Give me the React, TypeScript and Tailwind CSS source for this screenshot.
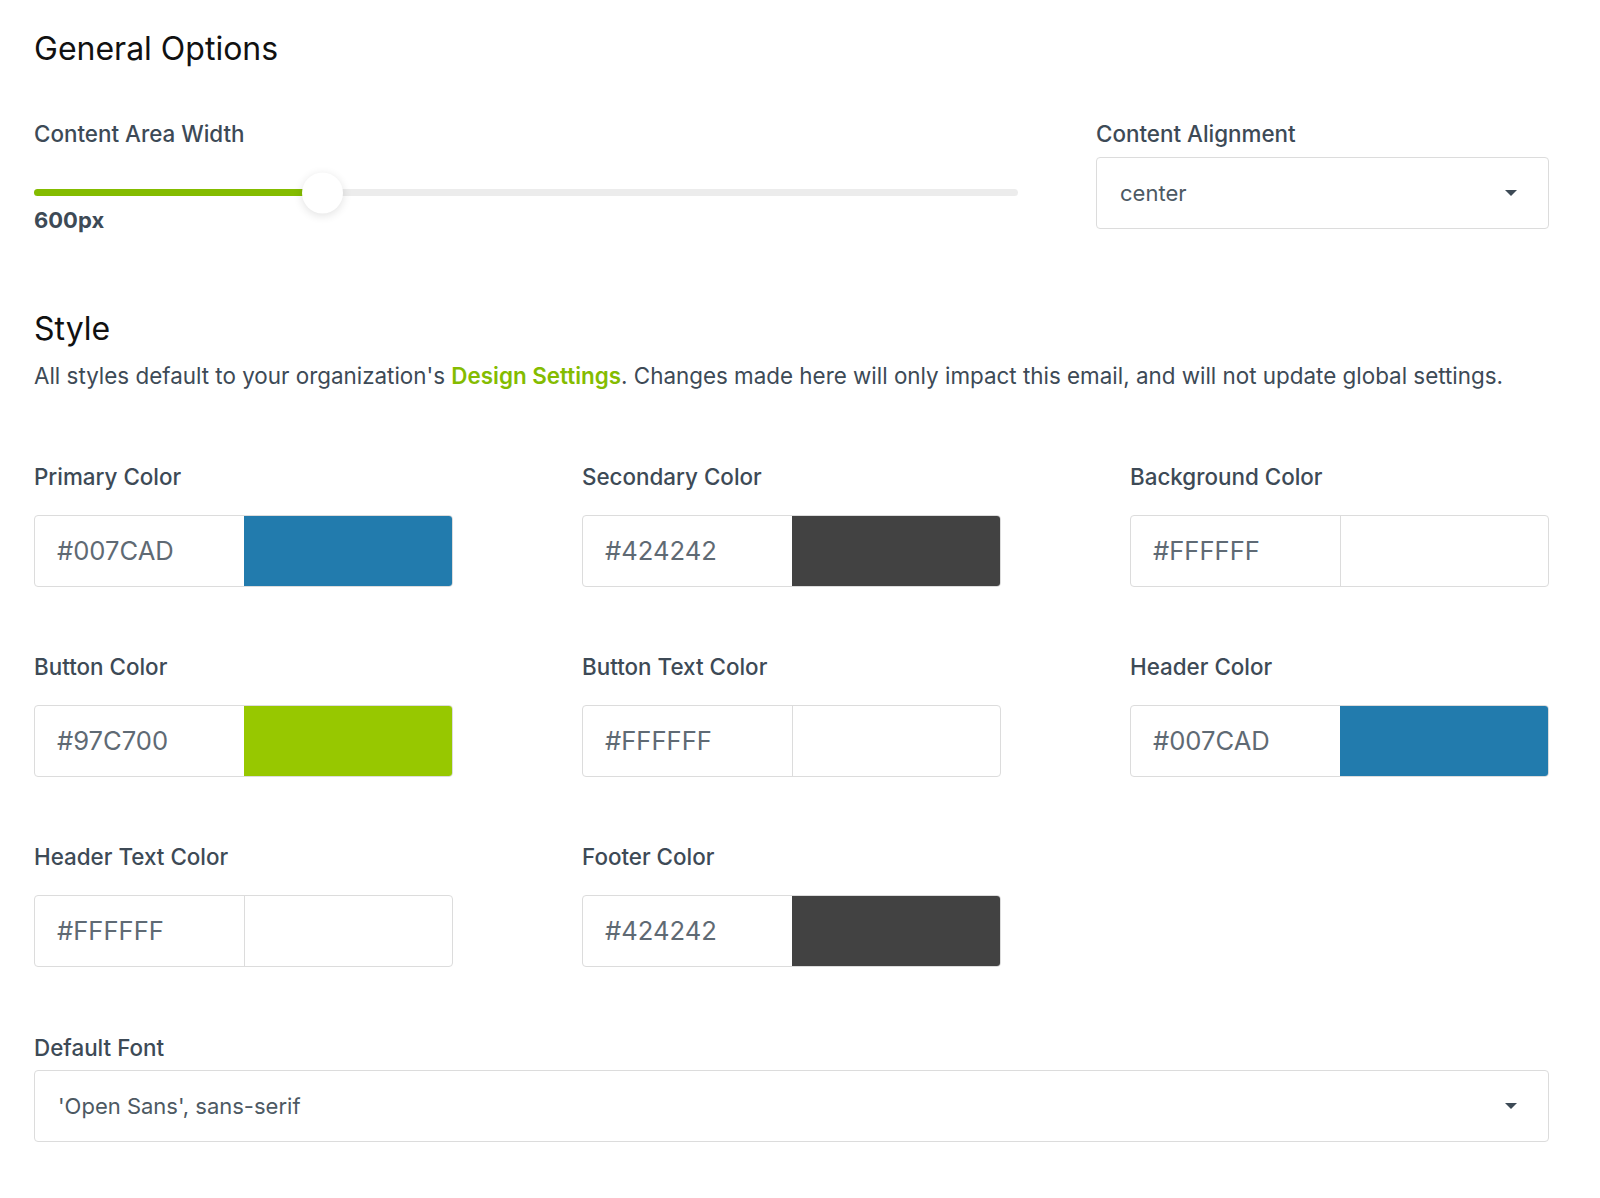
import React from "react";

type ColorField = {
    label: string;
    value: string;
    swatch: string | null;
};

const colorFields: ColorField[] = [
    { label: "Primary Color", value: "#007CAD", swatch: "bg-[#227bad]" },
    { label: "Secondary Color", value: "#424242", swatch: "bg-[#424242]" },
    { label: "Background Color", value: "#FFFFFF", swatch: null },
    { label: "Button Color", value: "#97C700", swatch: "bg-[#97c800]" },
    { label: "Button Text Color", value: "#FFFFFF", swatch: null },
    { label: "Header Color", value: "#007CAD", swatch: "bg-[#227bad]" },
    { label: "Header Text Color", value: "#FFFFFF", swatch: null },
    { label: "Footer Color", value: "#424242", swatch: "bg-[#424242]" },
];

function Caret() {
    return (
        <svg width="14" height="8" viewBox="0 0 14 8" className="fill-[#3d4a56]">
            <path d="M1 1h12L7 7z" />
        </svg>
    );
}

function Label({ children }: { children: React.ReactNode }) {
    return (
        <div className="text-[22.4px] leading-7 font-medium text-[#3d4a56]">{children}</div>
    );
}

function ColorInput({ field }: { field: ColorField }) {
    return (
        <div>
            <Label>{field.label}</Label>
            <div className="mt-[24px] flex h-[72px] rounded border border-[#dcdcdc] overflow-hidden">
                <div className="w-[209px] flex items-center pl-[22px] text-[25.6px] text-[#5f6a74]">
                    {field.value}
                </div>
                {field.swatch ? (
                    <div className={`flex-1 -my-px -mr-px ${field.swatch}`} />
                ) : (
                    <div className="flex-1 border-l border-[#dcdcdc]" />
                )}
            </div>
        </div>
    );
}

export default function App() {
    return (
        <div className="min-h-[1198px] bg-white font-['Inter',sans-serif] pt-[31px]">
            <div className="ml-[34px] w-[1515px]">
                {/* General options */}
                <h2 className="text-[32px] leading-9 text-[#111]">General Options</h2>

                <div className="mt-[50px] flex gap-[78px]">
                    <div className="flex-1">
                        <div className="pt-[3px]">
                            <Label>Content Area Width</Label>
                        </div>
                        <div className="relative mt-[41px] h-[7px] rounded-full bg-[#ececec]">
                            <div className="h-full w-[289px] rounded-full bg-[#84bc00]" />
                            <div className="absolute left-[268px] top-1/2 -translate-y-1/2 w-[41px] h-[41px] rounded-full bg-white shadow-[0_2px_10px_rgba(0,0,0,0.12)]" />
                        </div>
                        <div className="mt-[10px] text-[22px] leading-7 font-bold text-[#3d4a56]">600px</div>
                    </div>
                    <div className="w-[453px]">
                        <div className="pt-[3px]">
                            <Label>Content Alignment</Label>
                        </div>
                        <div className="mt-[9px] flex h-[72px] items-center justify-between rounded border border-[#dcdcdc] pl-[23px] pr-[30px] text-[22px] text-[#4d5963]">
                            <span>center</span>
                            <Caret />
                        </div>
                    </div>
                </div>

                {/* Style */}
                <h2 className="mt-[77px] text-[32px] leading-9 text-[#111]">Style</h2>
                <p className="mt-[15px] text-[22.4px] leading-7 text-[#3d4a56]">
                    All styles default to your organization's{" "}
                    <a className="font-semibold text-[#84bc00]">Design Settings</a>. Changes made here will
                    only impact this email, and will not update global settings.
                </p>

                <div className="mt-[73px] grid grid-cols-[419px_419px_419px] gap-x-[129px] gap-y-[66px]">
                    {colorFields.map((f) => (
                        <ColorInput key={f.label} field={f} />
                    ))}
                </div>

                <div className="mt-[67px]">
                    <Label>Default Font</Label>
                    <div className="mt-[8px] flex h-[72px] items-center justify-between rounded border border-[#dcdcdc] pl-[23px] pr-[30px] text-[22px] text-[#4d5963]">
                        <span>'Open Sans', sans-serif</span>
                        <Caret />
                    </div>
                </div>
            </div>
        </div>
    );
}
